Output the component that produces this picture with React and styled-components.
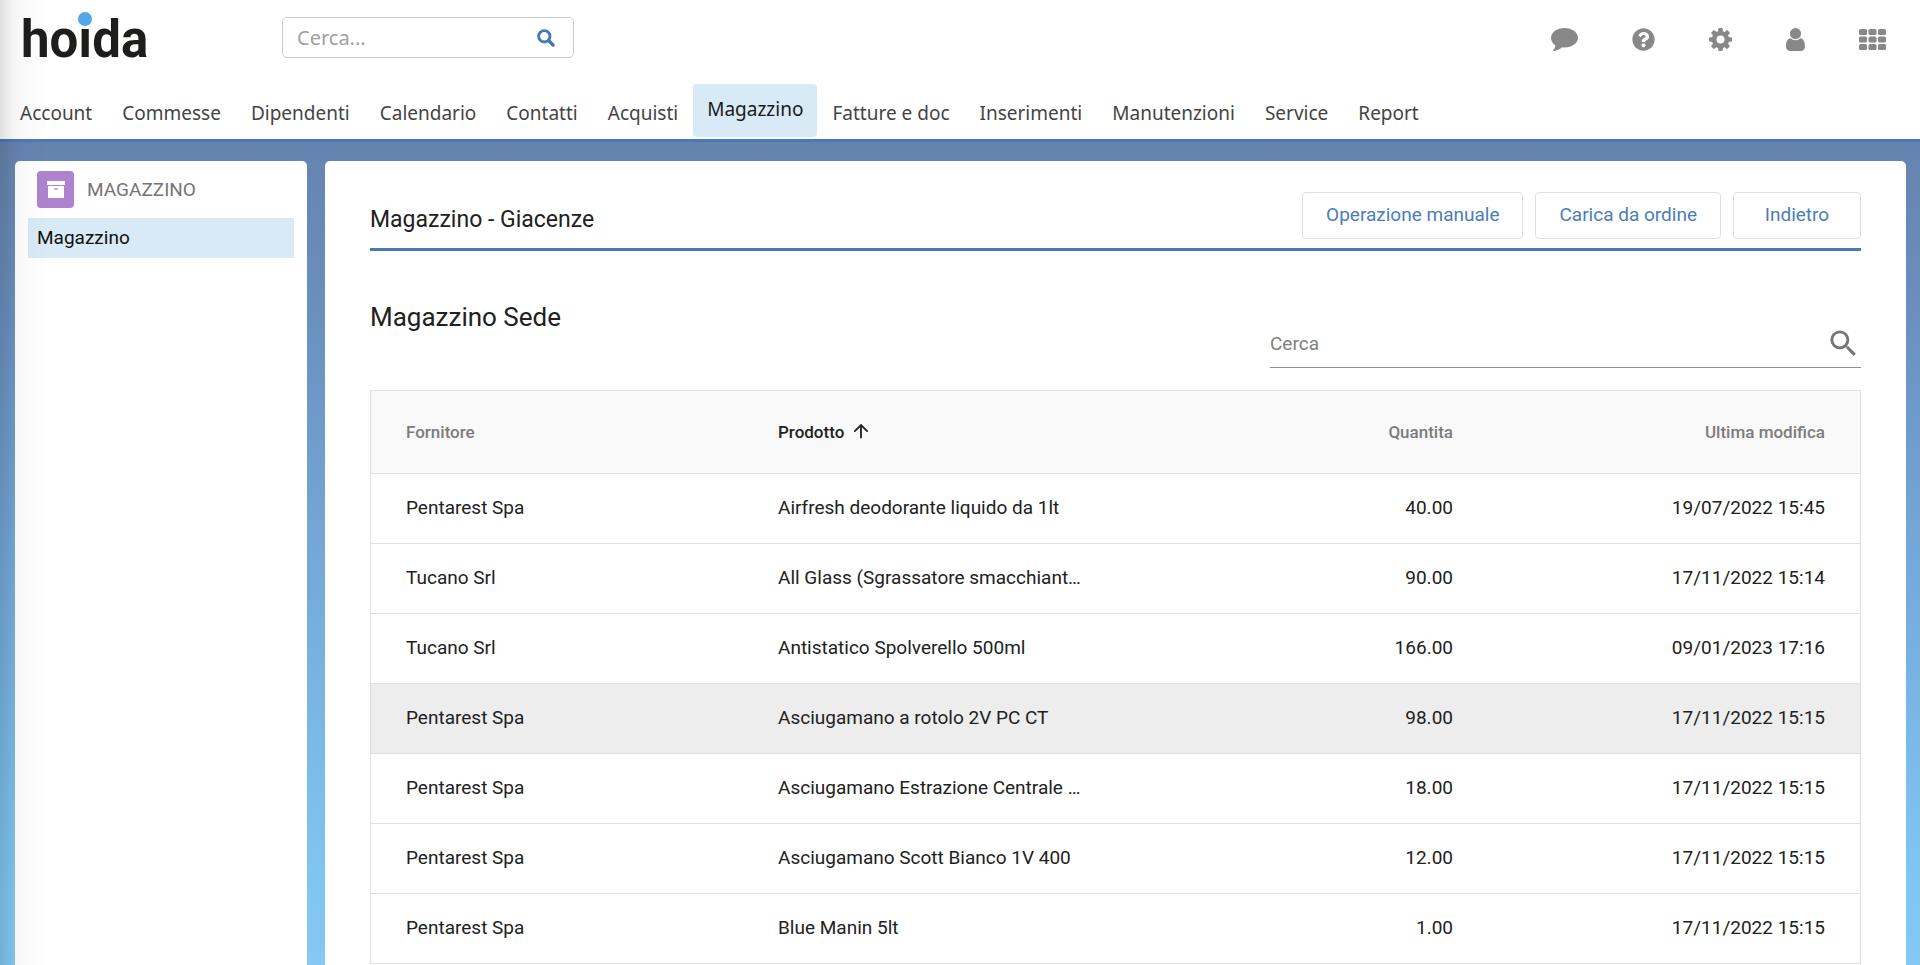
import React from 'react'
import styled, { createGlobalStyle } from 'styled-components'
import { FaQuestionCircle } from 'react-icons/fa'
import { MdSearch, MdArrowUpward } from 'react-icons/md'

const GlobalStyle = createGlobalStyle`
    *{
        box-sizing: border-box;
    }
    body{
        margin: 0;
        font-family: Roboto, sans-serif;
        color: #212121;
        background-color: white;
    }
    button, input{
        font-family: inherit;
    }
`
const Page = styled.div`
    height: 100vh;
    overflow: hidden;
    display: flex;
    flex-direction: column;
    position: relative;
`
// soft shadow along the left side of the window
const EdgeShadow = styled.div`
    position: absolute;
    top: 0;
    bottom: 0;
    left: 0;
    width: 50px;
    pointer-events: none;
    background: linear-gradient(to right, rgba(0, 0, 0, 0.12), rgba(0, 0, 0, 0.04) 14px, rgba(0, 0, 0, 0.02) 24px, transparent);
`
const Header = styled.header`
    background-color: white;
    border-bottom: 3px solid #4a7ab5;
    font-family: 'Noto Sans', sans-serif;
`
const TopBar = styled.div`
    height: 84px;
    padding: 0 34px 0 21px;
    display: flex;
    align-items: flex-start;
`
const Logo = styled.a`
    width: 261px;
    padding-top: 10px;
    font-family: Roboto, sans-serif;
    font-size: 51px;
    line-height: 60px;
    font-weight: 700;
    color: #1d1d1b;
    text-decoration: none;
`
const LogoStem = styled.span`
    position: relative;
    &::before{
        content: '';
        position: absolute;
        top: 2px;
        left: 50%;
        width: 14px;
        height: 14px;
        margin-left: -7px;
        border-radius: 50%;
        background-color: #50a9e6;
    }
`
const SearchBox = styled.form`
    margin-top: 17px;
    width: 292px;
    height: 41px;
    border: 1px solid #cccccc;
    border-radius: 5px;
    display: flex;
    align-items: center;
    padding: 0 18px 0 14px;
`
const SearchInput = styled.input`
    flex: 1;
    min-width: 0;
    border: none;
    outline: none;
    padding: 0;
    font-size: 20px;
    &::placeholder{
        color: #a0a0a0;
    }
`
const IconButton = styled.button`
    border: none;
    background: transparent;
    padding: 0;
    display: flex;
    color: ${(props) => props.$color || '#888888'};
    cursor: pointer;
`
const Tools = styled.div`
    margin-left: auto;
    padding-top: 28px;
    display: flex;
    align-items: center;
    gap: 54px;
`
const Nav = styled.nav`
    height: 55px;
    padding: 0 5px;
    display: flex;
    align-items: flex-start;
`
const NavLink = styled.a`
    padding: ${(props) => (props.$active ? '12px 14px 14px' : '16px 15px 10px')};
    height: 53px;
    border-radius: 4px;
    font-size: 19px;
    line-height: 26px;
    text-decoration: none;
    white-space: nowrap;
    color: ${(props) => (props.$active ? '#1a1a1a' : '#444444')};
    background-color: ${(props) => (props.$active ? '#d8eaf6' : 'transparent')};
`
const Body = styled.div`
    flex: 1;
    min-height: 0;
    padding: 19px 14px 0 15px;
    display: flex;
    gap: 18px;
    background: linear-gradient(to bottom, #6683af, #6a8fbd 20%, #74a8d8 50%, #80c6f2 90%, #84c8f3);
`
const Sidebar = styled.aside`
    width: 292px;
    flex-shrink: 0;
    padding: 10px 13px;
    border-radius: 5px 5px 0 0;
    background-color: white;
`
const SideTitle = styled.div`
    height: 37px;
    margin: 0 9px 10px;
    display: flex;
    align-items: center;
    gap: 13px;
    font-size: 19px;
    color: #757575;
`
const Badge = styled.span`
    width: 37px;
    height: 37px;
    border-radius: 4px;
    background-color: #ae82ce;
    color: white;
    display: flex;
    align-items: center;
    justify-content: center;
`
const SideLink = styled.a`
    display: block;
    padding: 0 9px;
    font-size: 19px;
    line-height: 40px;
    color: #111111;
    text-decoration: none;
    background-color: #d8eaf6;
`
const Content = styled.main`
    flex: 1;
    min-width: 0;
    overflow: hidden;
    padding: 31px 45px 0;
    border-radius: 5px 5px 0 0;
    background-color: white;
`
const ContentHeader = styled.div`
    height: 59px;
    border-bottom: 3px solid #4a7ab5;
    display: flex;
    justify-content: space-between;
`
const Title = styled.h1`
    margin: 12px 0 0;
    font-size: 23px;
    line-height: 32px;
    font-weight: 400;
`
const Actions = styled.div`
    display: flex;
    gap: 12px;
`
const Button = styled.button`
    height: 47px;
    min-width: 128px;
    padding: 0 23px 2px;
    border: 1px solid #e0e0e0;
    border-radius: 4px;
    background-color: white;
    color: #4a7dbb;
    font-size: 19px;
    cursor: pointer;
`
const ListHeader = styled.div`
    height: 139px;
    display: flex;
    justify-content: space-between;
`
const Subtitle = styled.h2`
    margin: 50px 0 0;
    font-size: 26px;
    line-height: 32px;
    font-weight: 400;
`
const Filter = styled.form`
    width: 591px;
    height: 48px;
    margin-top: 69px;
    border-bottom: 1px solid #8e8e8e;
    display: flex;
    align-items: center;
`
const FilterInput = styled.input`
    flex: 1;
    min-width: 0;
    border: none;
    outline: none;
    padding: 0;
    font-size: 19px;
    &::placeholder{
        color: #808080;
    }
`
const Table = styled.table`
    width: 100%;
    table-layout: fixed;
    border-collapse: collapse;
    border: 1px solid #e0e0e0;
`
const Th = styled.th`
    height: 83px;
    padding: 0 35px;
    font-size: 17px;
    line-height: 24px;
    font-weight: 500;
    text-align: ${(props) => (props.$right ? 'right' : 'left')};
    color: ${(props) => (props.$sorted ? '#212121' : '#7c7c7c')};
    background-color: #f9f9f9;
    svg{
        vertical-align: -4px;
        margin-left: 6px;
    }
`
const Tr = styled.tr`
    border-top: 1px solid #e0e0e0;
    background-color: ${(props) => (props.$hovered ? '#ededed' : 'white')};
`
const Td = styled.td`
    height: 70px;
    padding: 0 35px 2px;
    font-size: 19px;
    text-align: ${(props) => (props.$right ? 'right' : 'left')};
    white-space: nowrap;
`

const SearchIcon = () => (
    <svg width="18" height="18" viewBox="0 0 18 18" fill="none" stroke="currentColor">
        <circle cx="7.3" cy="7.3" r="5.7" strokeWidth="2.8" />
        <path d="M11.8 11.8L16 16" strokeWidth="3.4" strokeLinecap="round" />
    </svg>
)

const CommentIcon = () => (
    <svg width="27" height="23" viewBox="0 0 27 23" fill="currentColor">
        <path d="M13.5 0C21 0 27 4.3 27 9.7s-6 9.7-13.5 9.7c-.9 0-1.7-.1-2.5-.2C8.7 21.3 6 22.6 3 23c-.9.1-1.3-.7-.7-1.3 1.2-1.2 2-2.5 2.1-4.3C1.7 15.6 0 12.8 0 9.7 0 4.3 6 0 13.5 0z" />
    </svg>
)

const CogIcon = () => (
    <svg width="23" height="23" viewBox="0 0 23 23" fill="currentColor">
        <mask id="cog-hole">
            <rect width="23" height="23" fill="white" />
            <circle cx="11.5" cy="11.5" r="4" fill="black" />
        </mask>
        <g mask="url(#cog-hole)">
            <circle cx="11.5" cy="11.5" r="8.7" />
            {[0, 45, 90, 135].map((angle) => (
                <rect key={angle} x="9.2" y="0" width="4.6" height="23" rx="1.2" transform={`rotate(${angle} 11.5 11.5)`} />
            ))}
        </g>
    </svg>
)

const UserIcon = () => (
    <svg width="19" height="23" viewBox="0 0 19 23" fill="currentColor">
        <circle cx="9.5" cy="5.6" r="5.6" />
        <path d="M4.6 10.3c1.3 1.3 3 2 4.9 2s3.6-.7 4.9-2c3 .5 4.6 3.6 4.6 8.3 0 2.7-1.5 4.4-3.9 4.4H3.9C1.5 23 0 21.3 0 18.6c0-4.7 1.6-7.8 4.6-8.3z" />
    </svg>
)

const GridIcon = () => (
    <svg width="27" height="21" viewBox="0 0 27 21" fill="currentColor">
        {[0, 7.5, 15].map((y) => [0, 9.5, 19].map((x) => (
            <rect key={`${x}-${y}`} x={x} y={y} width="8" height="6" rx="1.5" />
        )))}
    </svg>
)

const ArchiveIcon = () => (
    <svg width="18" height="17" viewBox="0 0 18 17" fill="currentColor">
        <rect width="18" height="4" />
        <path fillRule="evenodd" d="M1 5h16v12H1zM7 7.2v1.3h4V7.2z" />
    </svg>
)

const links = ['Account', 'Commesse', 'Dipendenti', 'Calendario', 'Contatti', 'Acquisti', 'Magazzino', 'Fatture e doc', 'Inserimenti', 'Manutenzioni', 'Service', 'Report']

const rows = [
    { id: 1, fornitore: 'Pentarest Spa', prodotto: 'Airfresh deodorante liquido da 1lt', quantita: '40.00', modifica: '19/07/2022 15:45' },
    { id: 2, fornitore: 'Tucano Srl', prodotto: 'All Glass (Sgrassatore smacchiant…', quantita: '90.00', modifica: '17/11/2022 15:14' },
    { id: 3, fornitore: 'Tucano Srl', prodotto: 'Antistatico Spolverello 500ml', quantita: '166.00', modifica: '09/01/2023 17:16' },
    { id: 4, fornitore: 'Pentarest Spa', prodotto: 'Asciugamano a rotolo 2V PC CT', quantita: '98.00', modifica: '17/11/2022 15:15' },
    { id: 5, fornitore: 'Pentarest Spa', prodotto: 'Asciugamano Estrazione Centrale …', quantita: '18.00', modifica: '17/11/2022 15:15' },
    { id: 6, fornitore: 'Pentarest Spa', prodotto: 'Asciugamano Scott Bianco 1V 400', quantita: '12.00', modifica: '17/11/2022 15:15' },
    { id: 7, fornitore: 'Pentarest Spa', prodotto: 'Blue Manin 5lt', quantita: '1.00', modifica: '17/11/2022 15:15' },
]

const App = () => {
    return (
        <Page>
            <GlobalStyle />
            <Header>
                <TopBar>
                    <Logo href="#" aria-label="hoida">ho<LogoStem>ı</LogoStem>da</Logo>
                    <SearchBox>
                        <SearchInput type="text" placeholder="Cerca..." aria-label="Cerca nel sito" />
                        <IconButton type="button" $color="#3f78b8" aria-label="Cerca"><SearchIcon /></IconButton>
                    </SearchBox>
                    <Tools>
                        <IconButton aria-label="Messaggi"><CommentIcon /></IconButton>
                        <IconButton aria-label="Aiuto"><FaQuestionCircle size={23} /></IconButton>
                        <IconButton aria-label="Impostazioni"><CogIcon /></IconButton>
                        <IconButton aria-label="Profilo"><UserIcon /></IconButton>
                        <IconButton aria-label="Applicazioni"><GridIcon /></IconButton>
                    </Tools>
                </TopBar>
                <Nav>
                    {links.map((link) => (
                        <NavLink href="#" key={link} $active={link === 'Magazzino'}>{link}</NavLink>
                    ))}
                </Nav>
            </Header>
            <Body>
                <Sidebar>
                    <SideTitle>
                        <Badge><ArchiveIcon /></Badge>
                        MAGAZZINO
                    </SideTitle>
                    <SideLink href="#">Magazzino</SideLink>
                </Sidebar>
                <Content>
                    <ContentHeader>
                        <Title>Magazzino - Giacenze</Title>
                        <Actions>
                            <Button>Operazione manuale</Button>
                            <Button>Carica da ordine</Button>
                            <Button>Indietro</Button>
                        </Actions>
                    </ContentHeader>
                    <ListHeader>
                        <Subtitle>Magazzino Sede</Subtitle>
                        <Filter>
                            <FilterInput type="text" placeholder="Cerca" aria-label="Cerca prodotto" />
                            <IconButton type="button" $color="#757575" aria-label="Filtra"><MdSearch size={35} /></IconButton>
                        </Filter>
                    </ListHeader>
                    <Table>
                        <thead>
                            <tr>
                                <Th>Fornitore</Th>
                                <Th $sorted>Prodotto<MdArrowUpward size={22} /></Th>
                                <Th $right>Quantita</Th>
                                <Th $right>Ultima modifica</Th>
                            </tr>
                        </thead>
                        <tbody>
                            {rows.map((row) => (
                                <Tr key={row.id} $hovered={row.id === 4}>
                                    <Td>{row.fornitore}</Td>
                                    <Td>{row.prodotto}</Td>
                                    <Td $right>{row.quantita}</Td>
                                    <Td $right>{row.modifica}</Td>
                                </Tr>
                            ))}
                        </tbody>
                    </Table>
                </Content>
            </Body>
            <EdgeShadow />
        </Page>
    )
}

export default App
